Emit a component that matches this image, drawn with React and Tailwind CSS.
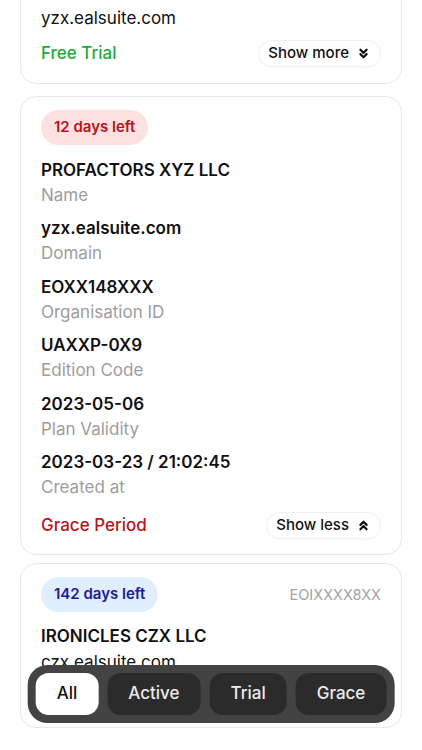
import React, {useState} from 'react';
import {ChevronsDown, ChevronsUp} from "lucide-react";

const fields = [
    {value: "PROFACTORS XYZ LLC", label: "Name"},
    {value: "yzx.ealsuite.com", label: "Domain"},
    {value: "EOXX148XXX", label: "Organisation ID"},
    {value: "UAXXP-0X9", label: "Edition Code"},
    {value: "2023-05-06", label: "Plan Validity"},
    {value: "2023-03-23 / 21:02:45", label: "Created at"},
];

const ToggleButton = ({open}) => (
    <button className="h-[27px] px-[9px] rounded-full bg-white border border-[#f1f1f4] shadow-[0_1px_2px_rgba(0,0,0,0.03)] flex items-center gap-[7px] text-[15px] font-medium text-[#111]">
        {open ? "Show less" : "Show more"}
        {open
            ? <ChevronsUp size={15} strokeWidth={3.4}/>
            : <ChevronsDown size={15} strokeWidth={3.4}/>}
    </button>
);

const Footer = ({status, color, open}) => (
    <div className="flex items-center justify-between">
        <p className={"text-[17px] font-medium " + color}>{status}</p>
        <ToggleButton open={open}/>
    </div>
);

const App = () => {
    const [tab, setTab] = useState("All");
    const tabs = ["All", "Active", "Trial", "Grace"];

    return (
        <div className="min-h-[750px] bg-white font-['Inter','Liberation_Sans',sans-serif] text-[#111] overflow-hidden">
            <div className="flex flex-col px-5 pb-[24px]">
                {/* collapsed card, scrolled partly out of view */}
                <div className="-mt-[30px] rounded-[16px] border border-[#e8e8ea] bg-white px-5 pt-[35px] pb-[16px]">
                    <p className="text-[17px] leading-[25px]">yzx.ealsuite.com</p>
                    <div className="mt-[9px]">
                        <Footer status="Free Trial" color="text-[#1fab3c]" open={false}/>
                    </div>
                </div>

                {/* expanded card */}
                <div className="mt-[12px] rounded-[16px] border border-[#e8e8ea] bg-white px-5 pt-[13px] pb-[15px]">
                    <span className="inline-flex h-[35px] items-center rounded-full bg-[#fde1e1] px-[13px] text-[15px] font-semibold text-[#b5141b]">
                        12 days left
                    </span>
                    <div className="mt-[13px] flex flex-col gap-[8.4px]">
                        {fields.map(f => (
                            <div key={f.label}>
                                <p className="text-[17px] leading-[25px] font-semibold">{f.value}</p>
                                <p className="text-[17px] leading-[25px] text-[#9d9d9d]">{f.label}</p>
                            </div>
                        ))}
                    </div>
                    <div className="mt-[12px]">
                        <Footer status="Grace Period" color="text-[#b5161b]" open={true}/>
                    </div>
                </div>

                {/* collapsed card, its footer sits behind the tab bar */}
                <div className="mt-[8px] rounded-[16px] border border-[#e8e8ea] bg-white px-5 pt-[13px] pb-[16px]">
                    <div className="flex items-center justify-between">
                        <span className="inline-flex h-[35px] items-center rounded-full bg-[#e1eefe] px-[13px] text-[15px] font-semibold text-[#1a1a9a]">
                            142 days left
                        </span>
                        <span className="text-[14.5px] text-[#a3a3a3]">EOIXXXX8XX</span>
                    </div>
                    <p className="mt-[12.5px] text-[17px] leading-[25px] font-semibold">IRONICLES CZX LLC</p>
                    <p className="mt-[1px] text-[17px] leading-[25px]">czx.ealsuite.com</p>
                    <div className="mt-[9px] h-[27px]"></div>
                </div>
            </div>

            <div className="fixed bottom-[27px] left-1/2 -translate-x-1/2 flex gap-[9px] rounded-[20px] bg-[#434343] p-[8px]">
                {tabs.map(t => (
                    <button key={t}
                            onClick={() => setTab(t)}
                            className={"h-[42px] px-[21px] rounded-[13px] text-[17px] font-medium " + (tab === t ? "bg-white text-[#111]" : "bg-[#2b2b2b] text-[#ececec]")}>
                        {t}
                    </button>
                ))}
            </div>
        </div>
    );
};

export default App;
